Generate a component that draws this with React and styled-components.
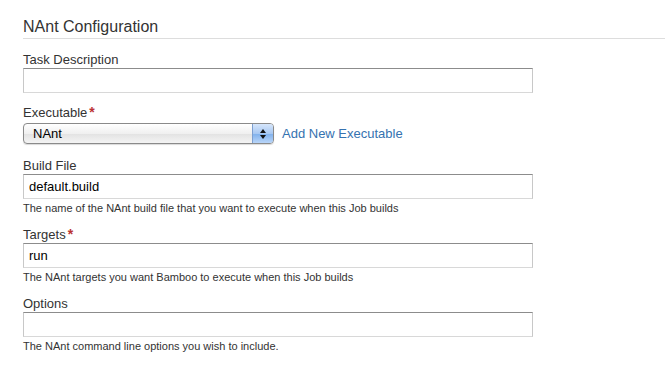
import React from "react";
import styled, { createGlobalStyle } from "styled-components";

const GlobalStyle = createGlobalStyle`
  body {
    margin: 0;
    background: #fff;
    font-family: "Liberation Sans", Arial, sans-serif;
    color: #333;
  }
`;

const Page = styled.div`
  padding: 17px 0 0 23px;
`;

const Heading = styled.h2`
  margin: 0 0 13px;
  padding-bottom: 1px;
  font-size: 16px;
  font-weight: normal;
  line-height: 20px;
  color: #333;
  border-bottom: 1px solid #ddd;
`;

const Field = styled.div`
  margin-bottom: ${(p) => p.gap || 13}px;
`;

const Label = styled.label`
  display: block;
  font-size: 13px;
  line-height: 16px;
  color: #333;
`;

const Required = styled.span`
  color: #b33;
  font-weight: bold;
  font-size: 14px;
  line-height: 0;
  margin-left: 2px;
`;

const TextInput = styled.input`
  display: block;
  box-sizing: border-box;
  width: 510px;
  height: 25px;
  margin: 0;
  padding: 0 5px;
  font-family: "Liberation Sans", Arial, sans-serif;
  font-size: 13px;
  color: #000;
  background: #fff;
  border: 1px solid #c8c8c8;
  border-top-color: #8c8c8c;
  border-bottom-color: #d8d8d8;
  outline: none;
`;

const Help = styled.div`
  margin-top: 2px;
  font-size: 11px;
  line-height: 14px;
  color: #333;
`;

const SelectRow = styled.div`
  display: flex;
  align-items: center;
  gap: 8px;
  margin-top: 2px;
`;

const SelectBox = styled.div`
  display: flex;
  box-sizing: border-box;
  width: 251px;
  height: 21px;
  border: 1px solid #8a8a8a;
  border-radius: 4px;
  overflow: hidden;
  background: linear-gradient(#ffffff, #f0f0f0 50%, #e2e2e2 51%, #f4f4f4);
  box-shadow: 0 1px 1px rgba(0, 0, 0, 0.15);
`;

const SelectText = styled.span`
  flex: 1;
  padding-left: 9px;
  font-size: 13px;
  line-height: 19px;
  color: #000;
`;

const Stepper = styled.span`
  display: flex;
  flex-direction: column;
  align-items: center;
  justify-content: center;
  gap: 2px;
  width: 20px;
  border-left: 1px solid #7d9fd0;
  background: linear-gradient(#d6e6fb, #a8c8f2 50%, #7fb0ec 51%, #b9d5f8);
`;

const Arrow = styled.span`
  width: 0;
  height: 0;
  border-left: 3px solid transparent;
  border-right: 3px solid transparent;
  ${(p) =>
    p.down ? "border-top: 4px solid #111;" : "border-bottom: 4px solid #111;"}
`;

const Link = styled.a`
  font-size: 13px;
  color: #3572b0;
  text-decoration: none;
  cursor: pointer;
`;

export default function App() {
  return (
    <>
      <GlobalStyle />
      <Page>
        <Heading>NAnt Configuration</Heading>

        <Field gap={12}>
          <Label>Task Description</Label>
          <TextInput defaultValue="" />
        </Field>

        <Field gap={14}>
          <Label>
            Executable<Required>*</Required>
          </Label>
          <SelectRow>
            <SelectBox>
              <SelectText>NAnt</SelectText>
              <Stepper>
                <Arrow />
                <Arrow down />
              </Stepper>
            </SelectBox>
            <Link>Add New Executable</Link>
          </SelectRow>
        </Field>

        <Field gap={12}>
          <Label>Build File</Label>
          <TextInput defaultValue="default.build" />
          <Help>The name of the NAnt build file that you want to execute when this Job builds</Help>
        </Field>

        <Field gap={12}>
          <Label>
            Targets<Required>*</Required>
          </Label>
          <TextInput defaultValue="run" />
          <Help>The NAnt targets you want Bamboo to execute when this Job builds</Help>
        </Field>

        <Field>
          <Label>Options</Label>
          <TextInput defaultValue="" />
          <Help>The NAnt command line options you wish to include.</Help>
        </Field>
      </Page>
    </>
  );
}
